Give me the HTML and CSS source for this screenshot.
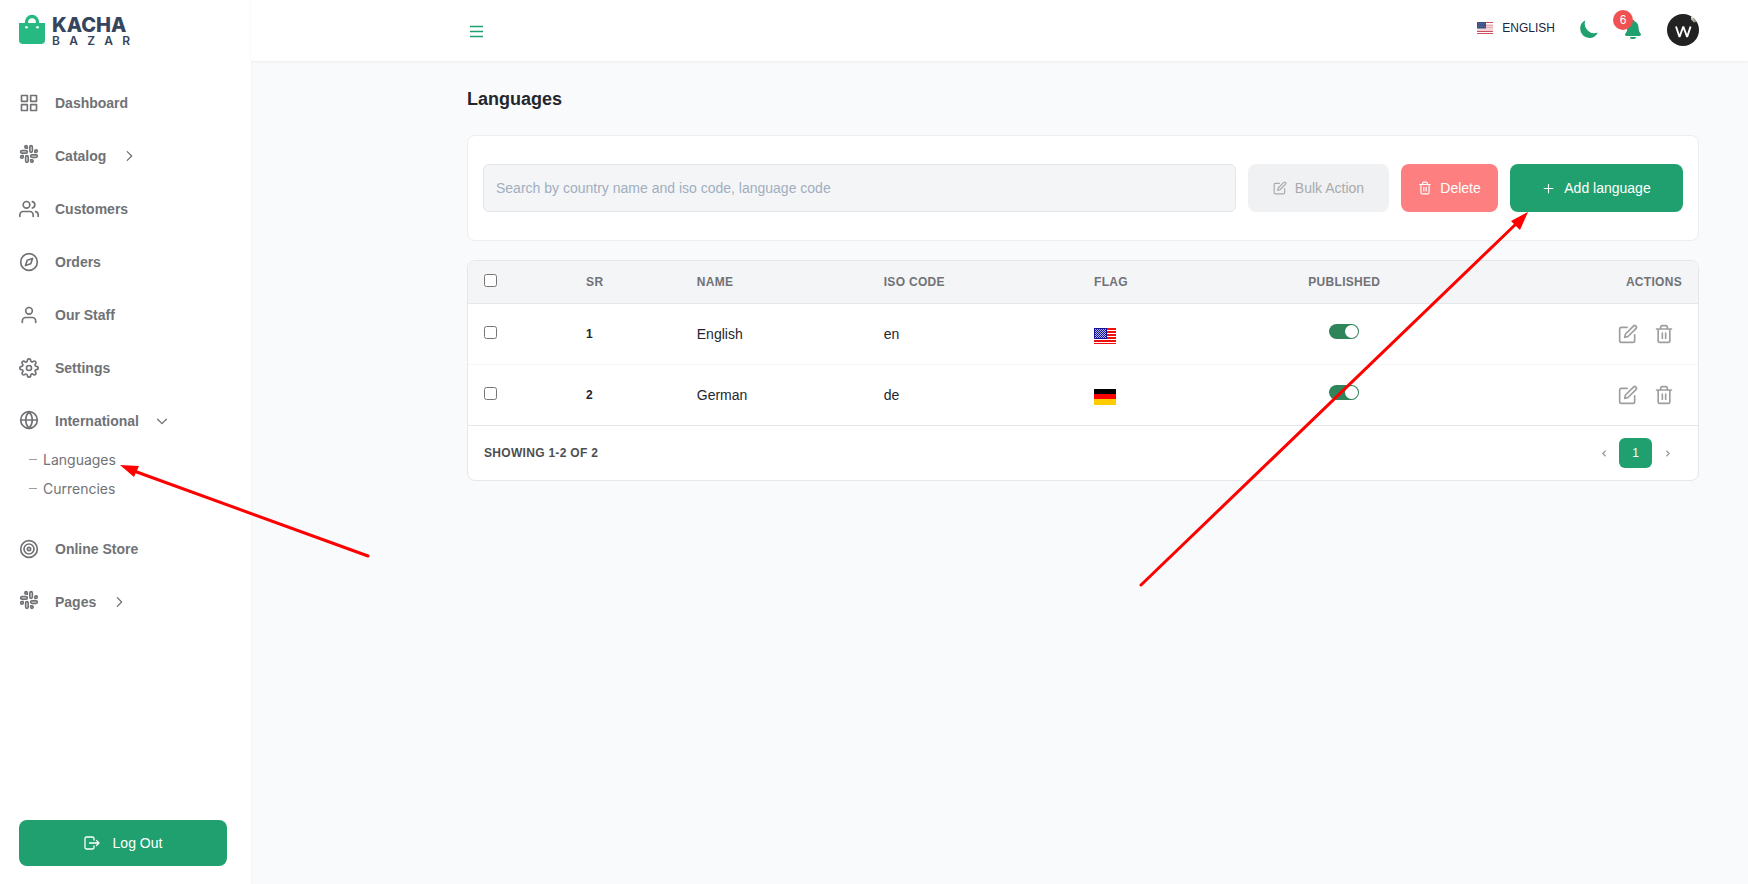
FILE: index.html
```html
<!DOCTYPE html>
<html lang="en">
<head>
<meta charset="utf-8">
<meta name="viewport" content="width=device-width, initial-scale=1">
<title>Languages - Kacha Bazar</title>
<link rel="stylesheet" href="styles.css">
</head>
<body>
<svg class="sprite" aria-hidden="true">
  <symbol id="i-slack" viewBox="0 0 24 24"><path d="M14.500 10c-.83 0-1.500-.67-1.500-1.500v-5c0-.83.67-1.500 1.500-1.500s1.500.67 1.500 1.500v5c0 .83-.67 1.500-1.500 1.500z"/><path d="M20.500 10H19V8.500c0-.83.67-1.500 1.500-1.500s1.500.67 1.500 1.500-.67 1.500-1.500 1.500z"/><path d="M9.500 14c.83 0 1.500.67 1.500 1.500v5c0 .83-.67 1.500-1.500 1.500S8 21.330 8 20.500v-5c0-.83.67-1.500 1.500-1.500z"/><path d="M3.500 14H5v1.500c0 .83-.67 1.500-1.500 1.500S2 16.330 2 15.500 2.670 14 3.500 14z"/><path d="M14 14.500c0-.83.67-1.500 1.500-1.500h5c.83 0 1.500.67 1.500 1.500s-.67 1.500-1.500 1.500h-5c-.83 0-1.500-.67-1.500-1.500z"/><path d="M15.500 19H14v1.500c0 .83.67 1.500 1.500 1.500s1.500-.67 1.500-1.500-.67-1.500-1.500-1.500z"/><path d="M10 9.500C10 8.670 9.330 8 8.500 8h-5C2.670 8 2 8.670 2 9.500S2.670 11 3.500 11h5c.83 0 1.500-.67 1.500-1.500z"/><path d="M8.500 5H10V3.500C10 2.670 9.330 2 8.500 2S7 2.670 7 3.500 7.670 5 8.500 5z"/></symbol>
  <symbol id="i-edit" viewBox="0 0 24 24"><path d="M11 4H4a2 2 0 0 0-2 2v14a2 2 0 0 0 2 2h14a2 2 0 0 0 2-2v-7"/><path d="M18.500 2.500a2.121 2.121 0 0 1 3 3L12 15l-4 1 1-4 9.500-9.500z"/></symbol>
  <symbol id="i-trash" viewBox="0 0 24 24"><path d="M3 6h18M19 6v14a2 2 0 0 1-2 2H7a2 2 0 0 1-2-2V6m3 0V4a2 2 0 0 1 2-2h4a2 2 0 0 1 2 2v2M10 11v6M14 11v6"/></symbol>
  <symbol id="i-right" viewBox="0 0 16 16"><path d="M6 3l5 5-5 5"/></symbol>
  <symbol id="i-down" viewBox="0 0 16 16"><path d="M3 6l5 5 5-5"/></symbol>
</svg>

<div class="app">
  <aside class="sidebar">
    <a class="logo" href="#" aria-label="Kacha Bazar">
      <svg class="logo-bag" viewBox="0 0 26 30"><path d="M7.500 13V8a5.500 5.500 0 0 1 11 0v5" fill="none" stroke="#26ba82" stroke-width="3.400"/><path d="M0 9h26v17a4 4 0 0 1-4 4H4a4 4 0 0 1-4-4z" fill="#26ba82"/><circle cx="7.500" cy="13.300" r="1.300" fill="#fff"/><circle cx="18.500" cy="13.300" r="1.300" fill="#fff"/></svg>
      <span class="logo-text"><span class="logo-top">KACHA</span><span class="logo-bottom"><span>B</span><span>A</span><span>Z</span><span>A</span><span>R</span></span></span>
    </a>
    <nav class="nav">
      <a class="nav-item" href="#"><svg class="icon" viewBox="0 0 24 24"><path d="M3 3h7v7H3zM14 3h7v7h-7zM14 14h7v7h-7zM3 14h7v7H3z"/></svg>Dashboard</a>
      <button class="nav-item" type="button"><svg class="icon raised"><use href="#i-slack"/></svg>Catalog<svg class="chev"><use href="#i-right"/></svg></button>
      <a class="nav-item" href="#"><svg class="icon" viewBox="0 0 24 24"><path d="M17 21v-2a4 4 0 0 0-4-4H5a4 4 0 0 0-4 4v2"/><circle cx="9" cy="7" r="4"/><path d="M23 21v-2a4 4 0 0 0-3-3.870M16 3.130a4 4 0 0 1 0 7.750"/></svg>Customers</a>
      <a class="nav-item" href="#"><svg class="icon" viewBox="0 0 24 24"><circle cx="12" cy="12" r="10"/><path d="M16.240 7.760l-2.120 6.360-6.360 2.120 2.120-6.360z"/></svg>Orders</a>
      <a class="nav-item" href="#"><svg class="icon" viewBox="0 0 24 24"><path d="M20 21v-2a4 4 0 0 0-4-4H8a4 4 0 0 0-4 4v2"/><circle cx="12" cy="7" r="4"/></svg>Our Staff</a>
      <a class="nav-item" href="#"><svg class="icon" viewBox="0 0 24 24"><circle cx="12" cy="12" r="3"/><path d="M19.400 15a1.650 1.650 0 0 0 .33 1.820l.06.06a2 2 0 0 1 0 2.830 2 2 0 0 1-2.830 0l-.06-.06a1.650 1.650 0 0 0-1.820-.33 1.650 1.650 0 0 0-1 1.510V21a2 2 0 0 1-2 2 2 2 0 0 1-2-2v-.09A1.650 1.650 0 0 0 9 19.400a1.650 1.650 0 0 0-1.820.33l-.06.06a2 2 0 0 1-2.830 0 2 2 0 0 1 0-2.830l.06-.06a1.650 1.650 0 0 0 .33-1.820 1.650 1.650 0 0 0-1.510-1H3a2 2 0 0 1-2-2 2 2 0 0 1 2-2h.09A1.650 1.650 0 0 0 4.600 9a1.650 1.650 0 0 0-.33-1.820l-.06-.06a2 2 0 0 1 0-2.830 2 2 0 0 1 2.830 0l.06.06a1.650 1.650 0 0 0 1.820.33H9a1.650 1.650 0 0 0 1-1.510V3a2 2 0 0 1 2-2 2 2 0 0 1 2 2v.09a1.650 1.650 0 0 0 1 1.510 1.650 1.650 0 0 0 1.820-.33l.06-.06a2 2 0 0 1 2.830 0 2 2 0 0 1 0 2.830l-.06.06a1.650 1.650 0 0 0-.33 1.820V9a1.650 1.650 0 0 0 1.510 1H21a2 2 0 0 1 2 2 2 2 0 0 1-2 2h-.09a1.650 1.650 0 0 0-1.510 1z"/></svg>Settings</a>
      <div class="nav-group">
        <button class="nav-item" type="button" aria-expanded="true"><svg class="icon globe" viewBox="0 0 24 24"><circle cx="12" cy="12" r="10"/><path d="M2 12h20M12 2a15.300 15.300 0 0 1 4 10 15.300 15.300 0 0 1-4 10 15.300 15.300 0 0 1-4-10 15.300 15.300 0 0 1 4-10z"/></svg>International<svg class="chev"><use href="#i-down"/></svg></button>
        <div class="subnav">
          <a class="subnav-item" href="#">Languages</a>
          <a class="subnav-item" href="#">Currencies</a>
        </div>
      </div>
      <a class="nav-item" href="#"><svg class="icon" viewBox="0 0 24 24"><circle cx="12" cy="12" r="10"/><circle cx="12" cy="12" r="6"/><circle cx="12" cy="12" r="2"/></svg>Online Store</a>
      <button class="nav-item" type="button"><svg class="icon raised"><use href="#i-slack"/></svg>Pages<svg class="chev"><use href="#i-right"/></svg></button>
    </nav>
    <button class="btn logout" type="button"><svg class="logout-icon" viewBox="0 0 16 16"><path d="M10 5V3.500A1.500 1.500 0 0 0 8.500 2h-6A1.500 1.500 0 0 0 1 3.500v9A1.500 1.500 0 0 0 2.500 14h6a1.500 1.500 0 0 0 1.500-1.500V11M12.500 5.500L15 8l-2.500 2.500M5.500 8H15"/></svg>Log Out</button>
  </aside>

  <div class="page">
    <header class="topbar">
      <button class="plain menu" type="button" aria-label="Menu"><svg viewBox="0 0 13 13"><path d="M0 1.500h13M0 6.500h13M0 11.500h13"/></svg></button>
      <div class="tools">
        <button class="plain lang" type="button">
          <svg class="lang-flag" viewBox="0 0 16 12"><path fill="#f3d5d9" d="M0 0h16v12H0z"/><path stroke="#c8505f" d="M0 .5h16M0 11.500h16"/><path stroke="#fff" d="M0 1.500h16M0 10.500h16"/><path stroke="#e3a3ab" stroke-width=".8" d="M8 3.500h8M8 5.500h8"/><path stroke="#c8505f" d="M0 9.500h16"/><path fill="#3f5084" d="M0 0h9v6.500H0z"/><path stroke="#7482aa" stroke-width=".6" stroke-dasharray=".8 1.200" d="M1 1.500h7M2 3h6M1 4.500h7"/></svg>ENGLISH</button>
        <button class="plain moon" type="button" aria-label="Dark mode"><svg viewBox="0 0 18 18"><path d="M5.400.3A9 9 0 0 0 .2 8.500 9.300 9.300 0 0 0 9.500 18a9.200 9.200 0 0 0 8.300-5.500A9.500 9.500 0 0 1 5.400.3z"/></svg></button>
        <button class="plain bell" type="button" aria-label="Notifications"><svg viewBox="0 0 16 19"><path d="M8 0c1 0 1.600.6 1.700 1.500C12 2.200 13.300 4.200 13.500 7c.2 3.500.8 5 2 6.500.9 1 .4 2.500-1 2.500h-13C.1 16-.4 14.500.5 13.500c1.200-1.500 1.800-3 2-6.500.2-2.800 1.500-4.800 3.800-5.500C6.400.6 7 0 8 0zM5 17h6a3 2 0 0 1-6 0z"/></svg><span class="badge">6</span></button>
        <button class="plain avatar" type="button" aria-label="Account"><svg viewBox="0 0 32 32"><clipPath id="round"><circle cx="16" cy="16" r="16"/></clipPath><g clip-path="url(#round)"><path fill="#222" d="M0 0h32v32H0z"/><path fill="#9fb3b5" d="M24 2.500l4 1 2 4-3 1-3-3z"/><path fill="#e8e2d8" d="M24 2l3 1-1 2-2-1z"/><path fill="#b58a66" d="M27 6l2 0 0 2-2 0z"/></g><path fill="none" stroke="#fff" stroke-width="1.900" stroke-linejoin="bevel" d="M9 12.500l3.500 10.500 3.800-10.500 3.800 10.500 3.500-10.500"/></svg></button>
      </div>
    </header>

    <main class="main">
      <h1 class="title">Languages</h1>
      <form class="card filters">
        <input class="search" type="search" aria-label="Search languages" placeholder="Search by country name and iso code, language code">
        <button class="btn bulk" type="button" disabled><svg><use href="#i-edit"/></svg>Bulk Action</button>
        <button class="btn delete" type="button" disabled><svg><use href="#i-trash"/></svg>Delete</button>
        <button class="btn add" type="button"><svg viewBox="0 0 24 24"><path d="M12 4v16M4 12h16"/></svg>Add language</button>
      </form>

      <section class="card listing">
        <table class="table">
          <colgroup><col class="c-check"><col class="c-sr"><col class="c-name"><col class="c-iso"><col class="c-flag"><col class="c-pub"><col></colgroup>
          <thead>
            <tr><th><input class="check" type="checkbox" aria-label="Select all"></th><th>SR</th><th>NAME</th><th>ISO CODE</th><th>FLAG</th><th class="center">PUBLISHED</th><th class="right">ACTIONS</th></tr>
          </thead>
          <tbody>
            <tr>
              <td><input class="check" type="checkbox" aria-label="Select English"></td><td class="sr">1</td><td>English</td><td>en</td>
              <td><svg class="flag" viewBox="0 0 22 16"><path fill="#fff" d="M0 0h22v16H0z"/><path stroke="#f00f0f" stroke-width="2" d="M0 1h22M0 4h22M0 7h22M0 10h22M0 13h22"/><path stroke="#f00f0f" d="M0 15.500h22"/><path stroke="#fff" d="M0 2.500h22M0 5.500h22M0 8.500h22M0 11.500h22"/><path fill="#1414a0" d="M0 0h13v11H0z"/><path stroke="#b9b9e6" stroke-dasharray="1 1" d="M1 1.500h11M2 2.500h10M1 3.500h11M2 4.500h10M1 5.500h11M2 6.500h10M1 7.500h11M2 8.500h10M1 9.500h11"/></svg></td>
              <td><input class="switch" type="checkbox" role="switch" aria-label="Publish English" checked></td>
              <td><div class="actions"><button class="plain" type="button" aria-label="Edit English"><svg><use href="#i-edit"/></svg></button><button class="plain" type="button" aria-label="Delete English"><svg><use href="#i-trash"/></svg></button></div></td>
            </tr>
            <tr>
              <td><input class="check" type="checkbox" aria-label="Select German"></td><td class="sr">2</td><td>German</td><td>de</td>
              <td><svg class="flag" viewBox="0 0 22 16"><path d="M0 0h22v5H0z"/><path fill="#f00" d="M0 5h22v5H0z"/><path fill="#fc0" d="M0 10h22v6H0z"/></svg></td>
              <td><input class="switch" type="checkbox" role="switch" aria-label="Publish German" checked></td>
              <td><div class="actions"><button class="plain" type="button" aria-label="Edit German"><svg><use href="#i-edit"/></svg></button><button class="plain" type="button" aria-label="Delete German"><svg><use href="#i-trash"/></svg></button></div></td>
            </tr>
          </tbody>
        </table>
        <footer class="foot">
          <span class="showing">SHOWING 1-2 OF 2</span>
          <nav class="pager" aria-label="Pagination">
            <button class="plain step" type="button" aria-label="Previous"><svg viewBox="0 0 8 8"><path d="M5 1.500L2.500 4 5 6.500"/></svg></button>
            <button class="plain current" type="button">1</button>
            <button class="plain step" type="button" aria-label="Next"><svg viewBox="0 0 8 8"><path d="M3 1.500L5.500 4 3 6.500"/></svg></button>
          </nav>
        </footer>
      </section>
    </main>
  </div>

  <svg class="arrows" width="1748" height="884" viewBox="0 0 1748 884" aria-hidden="true">
    <path class="shaft" d="M368 556L134 471M1141 585L1517 223"/>
    <path class="head" d="M120 465L139 466 134 477zM1528 212L1511 221 1520 230z"/>
  </svg>
</div>
</body>
</html>
```
FILE: styles.css
```css
* { box-sizing: border-box; }

:root {
  --green: #1fa06e;
  --muted: #707275;
  --dark: #24262d;
  --line: #e5e7eb;
}

body {
  margin: 0;
  background: #f9fafc;
  color: var(--dark);
  font: 14px/20px "Liberation Sans", Arial, sans-serif;
}

a { color: inherit; text-decoration: none; }
button, input { font: inherit; }
button { cursor: pointer; }
svg { display: block; flex: none; }

.sprite { position: absolute; width: 0; height: 0; }
.plain { display: flex; align-items: center; justify-content: center; padding: 0; border: 0; background: none; color: inherit; }

.app { position: relative; display: flex; min-height: 100vh; overflow: hidden; }

/* Sidebar */
.sidebar {
  display: flex;
  flex: none;
  flex-direction: column;
  width: 251px;
  padding: 14px 24px 18px 19px;
  background: #fff;
  box-shadow: 0 0 2px rgba(0, 0, 0, .08);
}
.logo { display: flex; gap: 7px; width: 111px; height: 30px; color: #36445c; font-family: Inter, sans-serif; }
.logo-bag { width: 26px; height: 30px; }
.logo-text { display: flex; flex: 1; flex-direction: column; padding-top: 1px; }
.logo-top { font-size: 20px; font-weight: 800; line-height: 20px; }
.logo-bottom { display: flex; justify-content: space-between; font-size: 12px; font-weight: 600; line-height: 11px; }

.nav { display: flex; flex: 1; flex-direction: column; gap: 13px; margin-top: 39px; }
.nav-item {
  display: flex;
  align-items: center;
  width: 100%;
  height: 40px;
  padding: 0;
  border: 0;
  background: none;
  color: var(--muted);
  font-weight: 700;
}
.icon { width: 20px; height: 20px; margin-right: 16px; fill: none; stroke: currentColor; stroke-width: 2; stroke-linecap: round; stroke-linejoin: round; }
.icon.raised { margin-bottom: 4px; }
.icon.globe { margin-bottom: 2px; }
.chev { width: 14px; height: 14px; margin-left: 16px; fill: none; stroke: currentColor; stroke-width: 1.5; stroke-linecap: round; stroke-linejoin: round; }
.subnav { padding: 4px 0 13px 10px; }
.subnav-item { display: flex; align-items: center; gap: 6px; height: 29px; color: var(--muted); font-family: Inter, sans-serif; }
.subnav-item::before { content: ""; width: 8px; height: 1px; background: #9e9e9e; }

/* Buttons */
.btn { display: flex; flex: none; align-items: center; justify-content: center; border: 0; border-radius: 8px; color: #fff; }
.btn svg { width: 14px; height: 14px; margin-right: 8px; fill: none; stroke: currentColor; stroke-width: 2; stroke-linecap: round; stroke-linejoin: round; }
.logout { height: 46px; background: var(--green); }
.btn .logout-icon { width: 16px; height: 16px; margin-right: 13px; stroke-width: 1.3; }

/* Top bar */
.page { flex: 1; min-width: 0; }
.topbar {
  display: flex;
  align-items: center;
  justify-content: space-between;
  height: 61px;
  padding: 0 49px 2px 219px;
  background: #fff;
  box-shadow: 0 1px 2px rgba(0, 0, 0, .06);
}
.menu svg { width: 13px; height: 13px; stroke: var(--green); stroke-width: 1.3; }
.menu { margin-top: 4px; }
.tools { display: flex; align-items: center; }
.lang { gap: 9px; margin: 0 25px 4px 0; color: #1b2440; font-size: 12px; line-height: 16px; }
.lang-flag { width: 16px; height: 12px; }
.moon svg { width: 18px; height: 18px; fill: var(--green); }
.moon { margin-bottom: 2px; }
.bell { position: relative; margin: 0 26px 0 27px; }
.bell svg { width: 16px; height: 19px; fill: var(--green); }
.badge {
  position: absolute;
  top: -10px;
  left: -12px;
  width: 20px;
  height: 20px;
  border-radius: 50%;
  background: #f05252;
  color: #fff;
  font-size: 12px;
  line-height: 20px;
}
.avatar svg { width: 32px; height: 32px; }

/* Content */
.main { padding: 24px 49px 24px 216px; }
.title { margin: 0 0 22px; font-size: 18px; line-height: 28px; }
.card { border: 1px solid #eceef1; border-radius: 8px; background: #fff; }
.filters { display: flex; gap: 12px; margin-bottom: 19px; padding: 28px 15px; }
.search {
  flex: 1;
  min-width: 0;
  height: 48px;
  padding: 0 12px;
  border: 1px solid #e2e4e9;
  border-radius: 6px;
  background: #f4f5f7;
}
.search::placeholder { color: #a0aec0; opacity: 1; }
.filters .btn { height: 48px; }
.bulk { width: 141px; background: #f0f1f3; }
.bulk:disabled { color: #a9aaac; }
.delete { width: 97px; background: #fd7f7f; }
.add { width: 173px; background: var(--green); }
.filters .add svg { width: 13px; height: 13px; margin-right: 9px; }

/* Table */
.listing { border-color: var(--line); overflow: hidden; }
.table { width: 100%; border-collapse: separate; border-spacing: 0; table-layout: fixed; }
.c-check { width: 8.3%; }
.c-sr { width: 9%; }
.c-name { width: 15.2%; }
.c-iso { width: 17.1%; }
.c-flag { width: 12.3%; }
.c-pub { width: 18.7%; }
.table th, .table td { padding: 0 16px; text-align: left; vertical-align: middle; }
.table th {
  height: 43px;
  border-bottom: 1px solid var(--line);
  background: #f4f5f7;
  color: var(--muted);
  font-size: 12px;
  letter-spacing: .025em;
}
.table td { height: 61px; border-bottom: 1px solid #f4f5f7; }
.table tbody tr:last-child td { border-color: var(--line); }
.table .center { text-align: center; }
.table .right { text-align: right; }
.table .sr { font-size: 12px; font-weight: 700; }
.check { display: block; width: 13px; height: 13px; margin: 0 0 4px; }
.flag { width: 22px; height: 16px; margin-top: 4px; }
.switch {
  display: block;
  width: 30px;
  height: 15px;
  margin: 0 auto 5px;
  padding: 1px;
  border-radius: 8px;
  appearance: none;
  background: #cbd5e0;
}
.switch::before { content: ""; display: block; width: 13px; height: 13px; border-radius: 50%; background: #fff; }
.switch:checked { background: #2f855a; }
.switch:checked::before { margin-left: auto; }
.actions { display: flex; justify-content: flex-end; color: #9e9e9e; }
.actions button { padding: 8px; }
.actions svg { width: 20px; height: 20px; fill: none; stroke: currentColor; stroke-width: 2; stroke-linecap: round; stroke-linejoin: round; }

.foot { display: flex; align-items: center; justify-content: space-between; height: 54px; padding: 0 16px; }
.showing { color: #4c4f52; font-size: 12px; font-weight: 700; letter-spacing: .025em; }
.pager { display: flex; align-items: center; }
.step { width: 30px; height: 30px; }
.step svg { width: 9px; height: 9px; fill: none; stroke: #9e9e9e; stroke-width: 1.2; }
.current { width: 33px; height: 30px; border-radius: 6px; background: var(--green); color: #fff; font-size: 12px; }

/* Annotation arrows */
.arrows { position: absolute; top: 0; left: 0; pointer-events: none; }
.shaft { fill: none; stroke: #fe0000; stroke-width: 3; stroke-linecap: round; }
.head { fill: #fe0000; }
```
